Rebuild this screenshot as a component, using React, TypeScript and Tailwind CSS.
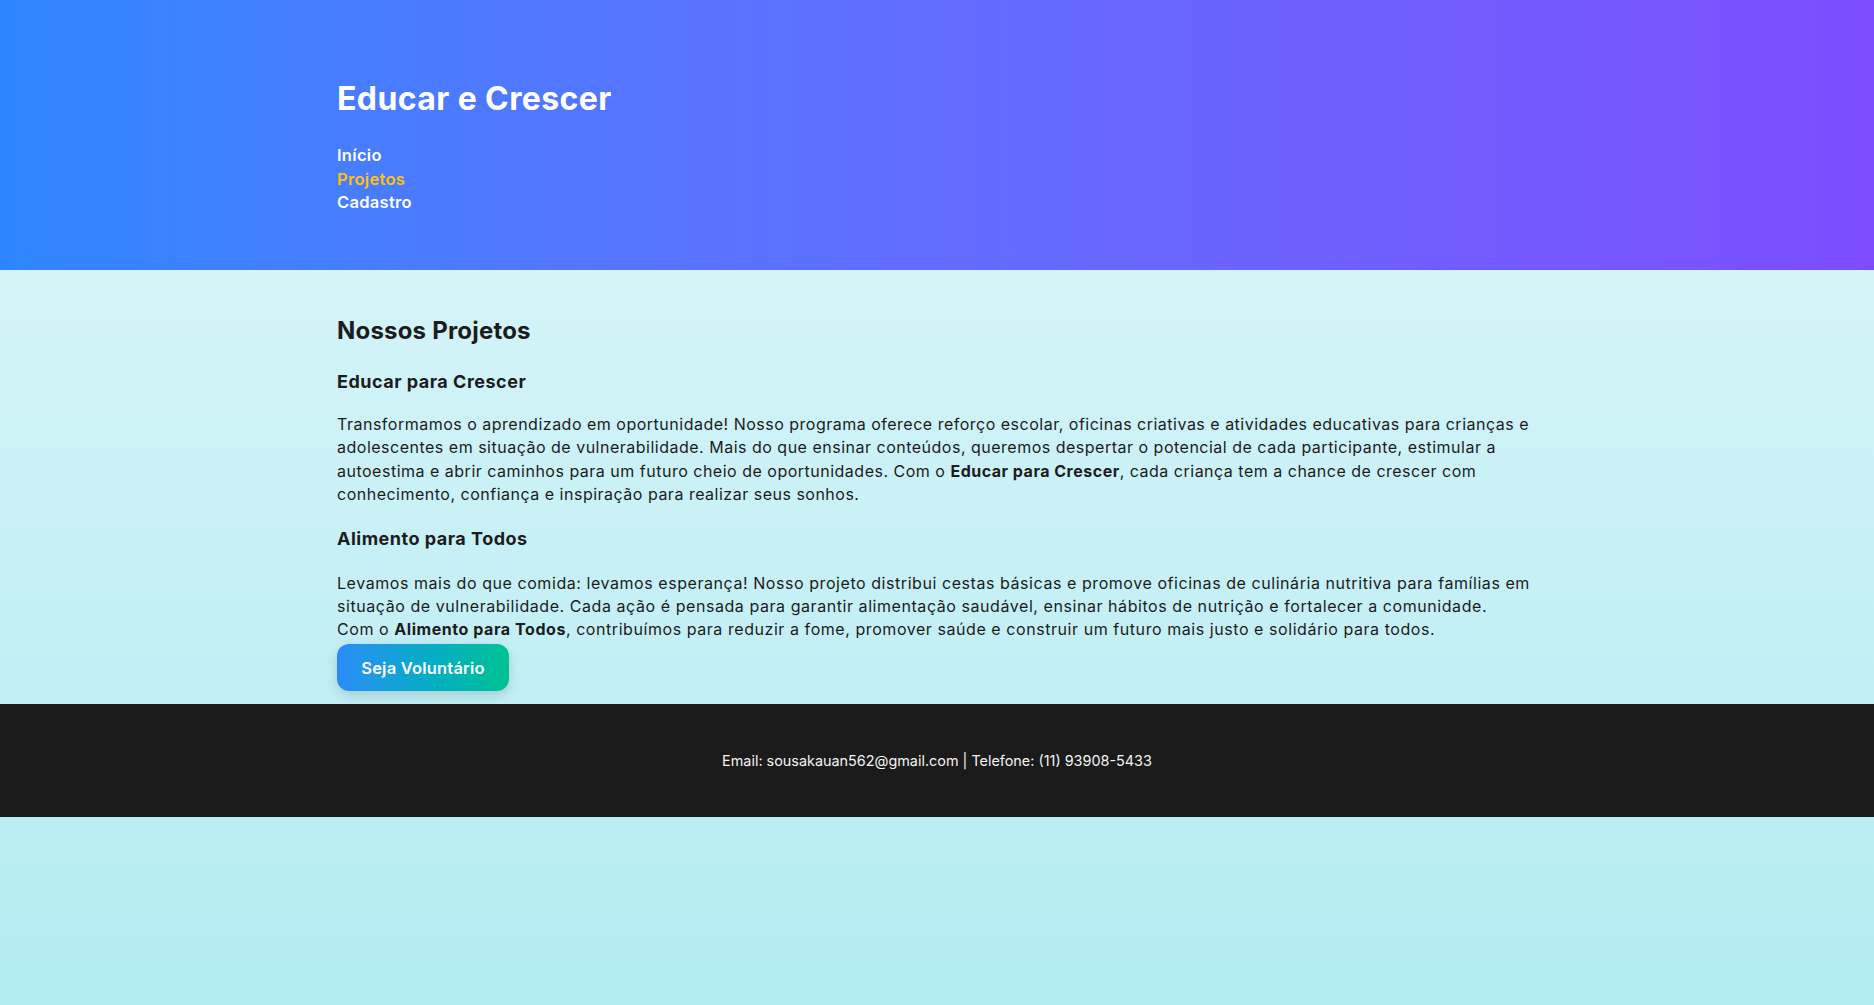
export default function App() {
  return (
    <div className="min-h-screen bg-linear-to-b from-[#e0f7fa] to-[#b2ebf2] font-['Inter',sans-serif] text-[#1c1c1c]">
      <header className="bg-linear-to-r from-[#2d86ff] to-[#7c4dff] pt-[75px] pb-[55px]">
        <div className="mx-auto max-w-[1200px]">
          <h1 className="mb-[21px] text-[32px] leading-[48px] font-bold tracking-[0.4px] text-white">
            Educar e Crescer
          </h1>
          <nav className="flex flex-col items-start text-[16.5px] leading-[23.5px] font-semibold tracking-[0.3px]">
            <a href="#" className="text-white">Início</a>
            <a href="#" className="text-[#ffc107]">Projetos</a>
            <a href="#" className="text-white">Cadastro</a>
          </nav>
        </div>
      </header>

      <main className="mx-auto max-w-[1200px] pt-[45px] pb-[13px]">
        <h2 className="text-[24px] leading-[32px] font-bold tracking-[0.2px]">Nossos Projetos</h2>

        <h3 className="mt-[22px] text-[18px] leading-[26px] font-bold tracking-[0.5px]">Educar para Crescer</h3>
        <p className="mt-[18.5px] text-[16px] leading-[23.3px] tracking-[0.5px]">
          Transformamos o aprendizado em oportunidade! Nosso programa oferece reforço escolar, oficinas
          criativas e atividades educativas para crianças e adolescentes em situação de vulnerabilidade. Mais
          do que ensinar conteúdos, queremos despertar o potencial de cada participante, estimular a autoestima
          e abrir caminhos para um futuro cheio de oportunidades. Com o <strong className="font-bold">Educar para Crescer</strong>,
          cada criança tem a chance de crescer com conhecimento, confiança e inspiração para realizar seus sonhos.
        </p>

        <h3 className="mt-[20px] text-[18px] leading-[26px] font-bold tracking-[0.5px]">Alimento para Todos</h3>
        <p className="mt-[19.4px] text-[16px] leading-[23.3px] tracking-[0.56px]">
          Levamos mais do que comida: levamos esperança! Nosso projeto distribui cestas básicas e promove
          oficinas de culinária nutritiva para famílias em situação de vulnerabilidade. Cada ação é pensada para
          garantir alimentação saudável, ensinar hábitos de nutrição e fortalecer a comunidade. Com&nbsp;o{" "}
          <strong className="font-bold">Alimento para Todos</strong>, contribuímos para reduzir a fome, promover
          saúde e construir um futuro mais justo e solidário para todos.
        </p>

        <button className="mt-[3px] flex h-[47px] w-[172px] items-center justify-center rounded-xl bg-linear-to-r from-[#2a8cf8] to-[#00c291] text-[16.5px] font-semibold tracking-[0.2px] text-white shadow-[0_4px_12px_rgba(0,0,0,0.15)]">
          Seja Voluntário
        </button>
      </main>

      <footer className="flex h-[113px] items-center justify-center bg-[#1b1b1b] text-[14.4px] text-[#f2f2f2]">
        Email: sousakauan562@gmail.com | Telefone: (11) 93908-5433
      </footer>
    </div>
  );
}
